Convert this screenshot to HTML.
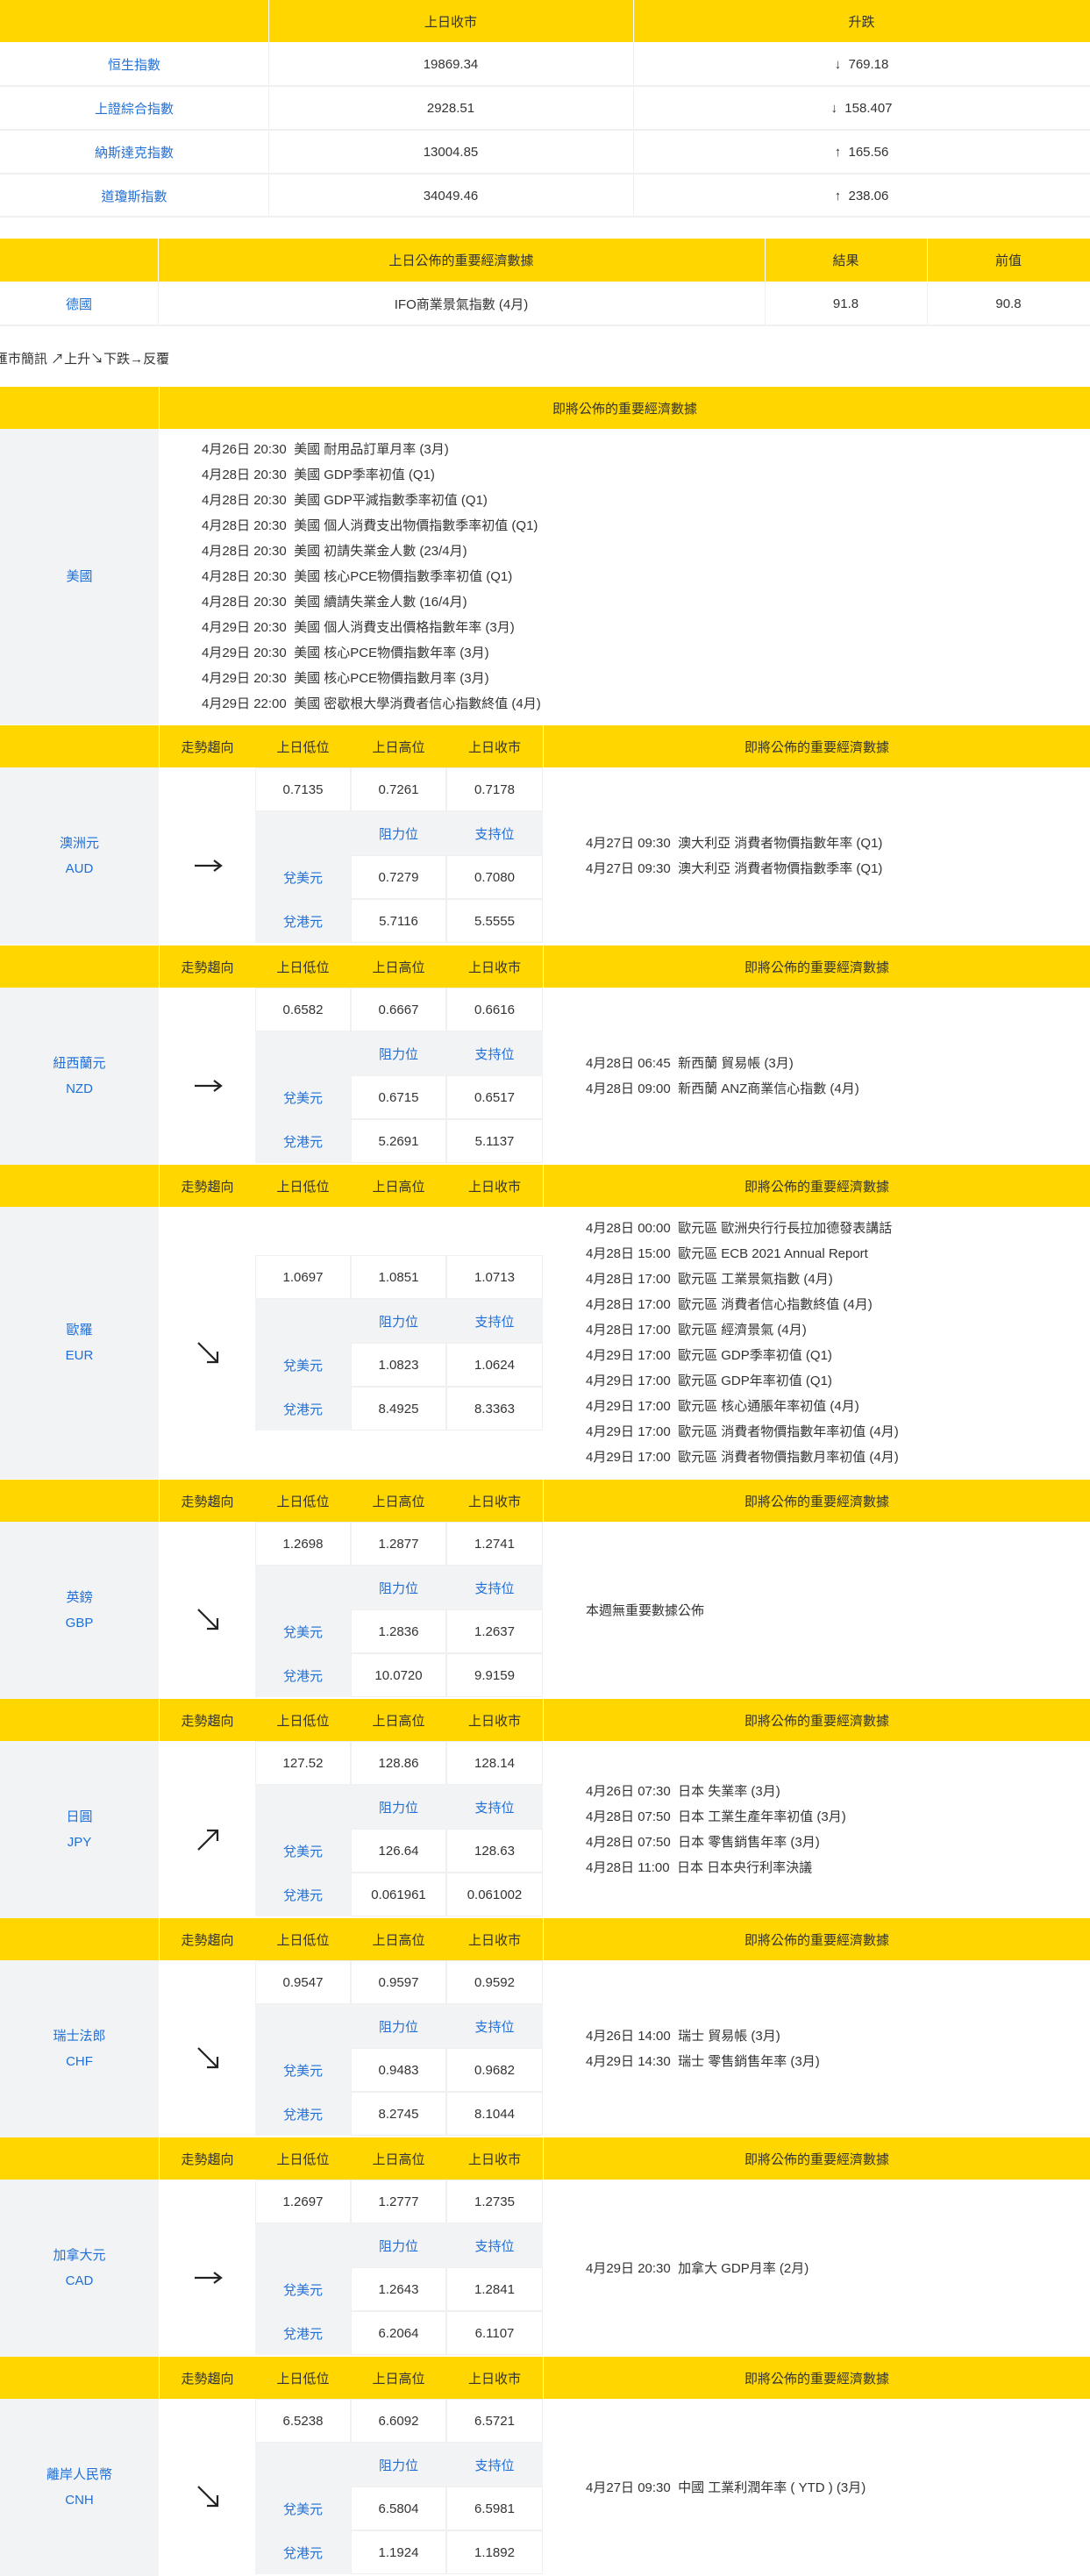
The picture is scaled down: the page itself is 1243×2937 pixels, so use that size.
<!DOCTYPE html>
<html><head><meta charset="utf-8">
<style>
*{margin:0;padding:0;box-sizing:border-box}
body{width:1243px;height:2928px;overflow:hidden;background:#fff;font-family:"Liberation Sans","Noto Sans CJK TC",sans-serif;font-size:15px;color:#333;position:relative}
.a{position:absolute}
.y{background:#FFD600}
.g{background:#F2F3F5}
.b{color:#1f6fd6}
.c{position:absolute;display:flex;align-items:center;justify-content:center;text-align:center}
.hl{position:absolute;top:0;width:1px;height:48px;background:#fff}
.blk{position:absolute;left:0;width:1243px}
.nw{position:absolute;left:620px;width:623px;display:flex;flex-direction:column;justify-content:center;padding-left:48px;line-height:29px;background:#fff}
.c1{position:absolute;left:0;width:181px;background:#F2F3F5;display:flex;flex-direction:column;justify-content:center;align-items:center;line-height:29px;color:#1f6fd6}
.it{position:absolute;left:182px;width:437px;height:200px}
.it .c{height:50px}
.w{background:#fff;border:1px solid #f0f0f0}
</style></head><body>

<!-- table 1 -->
<div class="a y" style="left:0;top:0;width:1243px;height:48px"></div>
<div class="hl" style="left:306px"></div><div class="hl" style="left:722px"></div>
<div class="c" style="left:306px;top:0;width:416px;height:48px">上日收市</div>
<div class="c" style="left:722px;top:0;width:521px;height:48px">升跌</div>
<div class="a" style="left:306px;top:48px;width:1px;height:200px;background:#f0f0f0"></div>
<div class="a" style="left:722px;top:48px;width:1px;height:200px;background:#f0f0f0"></div>
<div class="a" style="left:0;top:97px;width:1243px;height:2px;background:#f0f0f0"></div>
<div class="a" style="left:0;top:147px;width:1243px;height:2px;background:#f0f0f0"></div>
<div class="a" style="left:0;top:197px;width:1243px;height:2px;background:#f0f0f0"></div>
<div class="a" style="left:0;top:246px;width:1243px;height:2px;background:#f0f0f0"></div>
<div class="c b" style="left:0;top:48px;width:306px;height:50px">恒生指數</div>
<div class="c" style="left:306px;top:48px;width:416px;height:50px">19869.34</div>
<div class="c" style="left:722px;top:48px;width:521px;height:50px">↓&nbsp;&nbsp;769.18</div>
<div class="c b" style="left:0;top:98px;width:306px;height:50px">上證綜合指數</div>
<div class="c" style="left:306px;top:98px;width:416px;height:50px">2928.51</div>
<div class="c" style="left:722px;top:98px;width:521px;height:50px">↓&nbsp;&nbsp;158.407</div>
<div class="c b" style="left:0;top:148px;width:306px;height:50px">納斯達克指數</div>
<div class="c" style="left:306px;top:148px;width:416px;height:50px">13004.85</div>
<div class="c" style="left:722px;top:148px;width:521px;height:50px">↑&nbsp;&nbsp;165.56</div>
<div class="c b" style="left:0;top:198px;width:306px;height:50px">道瓊斯指數</div>
<div class="c" style="left:306px;top:198px;width:416px;height:50px">34049.46</div>
<div class="c" style="left:722px;top:198px;width:521px;height:50px">↑&nbsp;&nbsp;238.06</div>

<!-- table 2 -->
<div class="a y" style="left:0;top:272px;width:1243px;height:49px"></div>
<div class="hl" style="left:180px;top:272px;height:49px"></div><div class="hl" style="left:872px;top:272px;height:49px"></div><div class="hl" style="left:1057px;top:272px;height:49px"></div>
<div class="c" style="left:180px;top:272px;width:692px;height:49px">上日公佈的重要經濟數據</div>
<div class="c" style="left:872px;top:272px;width:185px;height:49px">結果</div>
<div class="c" style="left:1057px;top:272px;width:186px;height:49px">前值</div>
<div class="a" style="left:180px;top:321px;width:1px;height:50px;background:#f0f0f0"></div>
<div class="a" style="left:872px;top:321px;width:1px;height:50px;background:#f0f0f0"></div>
<div class="a" style="left:1057px;top:321px;width:1px;height:50px;background:#f0f0f0"></div>
<div class="a" style="left:0;top:370px;width:1243px;height:2px;background:#f0f0f0"></div>
<div class="c b" style="left:0;top:321px;width:180px;height:50px">德國</div>
<div class="c" style="left:180px;top:321px;width:692px;height:50px">IFO商業景氣指數 (4月)</div>
<div class="c" style="left:872px;top:321px;width:185px;height:50px">91.8</div>
<div class="c" style="left:1057px;top:321px;width:186px;height:50px">90.8</div>

<div class="a" style="left:-6px;top:399px;line-height:22px;white-space:nowrap">匯市簡訊 ↗上升↘下跌→反覆</div>

<!-- US -->
<div class="a y" style="left:0;top:441px;width:1243px;height:48px"></div>
<div class="hl" style="left:181px;top:441px"></div>
<div class="c" style="left:182px;top:441px;width:1061px;height:48px">即將公佈的重要經濟數據</div>
<div class="c1" style="top:489px;height:337px">美國</div>
<div class="a" style="left:230px;top:489px;height:337px;display:flex;flex-direction:column;justify-content:center;line-height:29px;white-space:nowrap">
<div>4月26日 20:30&nbsp; 美國 耐用品訂單月率 (3月)</div>
<div>4月28日 20:30&nbsp; 美國 GDP季率初值 (Q1)</div>
<div>4月28日 20:30&nbsp; 美國 GDP平減指數季率初值 (Q1)</div>
<div>4月28日 20:30&nbsp; 美國 個人消費支出物價指數季率初值 (Q1)</div>
<div>4月28日 20:30&nbsp; 美國 初請失業金人數 (23/4月)</div>
<div>4月28日 20:30&nbsp; 美國 核心PCE物價指數季率初值 (Q1)</div>
<div>4月28日 20:30&nbsp; 美國 續請失業金人數 (16/4月)</div>
<div>4月29日 20:30&nbsp; 美國 個人消費支出價格指數年率 (3月)</div>
<div>4月29日 20:30&nbsp; 美國 核心PCE物價指數年率 (3月)</div>
<div>4月29日 20:30&nbsp; 美國 核心PCE物價指數月率 (3月)</div>
<div>4月29日 22:00&nbsp; 美國 密歇根大學消費者信心指數終值 (4月)</div>
</div>

<!-- template blocks -->
<div class="blk" style="top:827px;height:250px">
<div class="a y" style="left:0;top:0;width:1243px;height:48px"></div><div class="hl" style="left:181px"></div><div class="hl" style="left:619px"></div>
<div class="c" style="left:182px;top:0;width:109px;height:48px">走勢趨向</div><div class="c" style="left:291px;top:0;width:109px;height:48px">上日低位</div><div class="c" style="left:400px;top:0;width:109px;height:48px">上日高位</div><div class="c" style="left:509px;top:0;width:110px;height:48px">上日收市</div><div class="c" style="left:620px;top:0;width:623px;height:48px">即將公佈的重要經濟數據</div>
<div class="c1" style="top:48px;height:202px"><div>澳洲元</div><div>AUD</div></div>
<div class="a" style="left:182px;top:48px;width:437px;height:202px;background:#fff"></div>
<div class="it" style="top:48px">
<div class="a" style="left:0;top:0;width:109px;height:200px;background:#fff"></div>
<div class="c w" style="left:109px;top:0;width:109px">0.7135</div><div class="c w" style="left:218px;top:0;width:109px">0.7261</div><div class="c w" style="left:327px;top:0;width:110px">0.7178</div>
<div class="a g" style="left:109px;top:50px;width:328px;height:50px"></div><div class="c b" style="left:218px;top:50px;width:109px">阻力位</div><div class="c b" style="left:327px;top:50px;width:110px">支持位</div>
<div class="c g b" style="left:109px;top:100px;width:109px">兌美元</div><div class="c w" style="left:218px;top:100px;width:109px">0.7279</div><div class="c w" style="left:327px;top:100px;width:110px">0.7080</div>
<div class="c g b" style="left:109px;top:150px;width:109px">兌港元</div><div class="c w" style="left:218px;top:150px;width:109px">5.7116</div><div class="c w" style="left:327px;top:150px;width:110px">5.5555</div>
<svg class="a" style="left:36px;top:100px" width="40" height="24"><path d="M4 12H33M26 6L34 12L26 18" stroke="#222" stroke-width="2.2" fill="none"/></svg>
</div>
<div class="nw" style="top:48px;height:202px"><div>4月27日 09:30&nbsp; 澳大利亞 消費者物價指數年率 (Q1)</div><div>4月27日 09:30&nbsp; 澳大利亞 消費者物價指數季率 (Q1)</div></div>
</div>

<div class="blk" style="top:1078px;height:250px">
<div class="a y" style="left:0;top:0;width:1243px;height:48px"></div><div class="hl" style="left:181px"></div><div class="hl" style="left:619px"></div>
<div class="c" style="left:182px;top:0;width:109px;height:48px">走勢趨向</div><div class="c" style="left:291px;top:0;width:109px;height:48px">上日低位</div><div class="c" style="left:400px;top:0;width:109px;height:48px">上日高位</div><div class="c" style="left:509px;top:0;width:110px;height:48px">上日收市</div><div class="c" style="left:620px;top:0;width:623px;height:48px">即將公佈的重要經濟數據</div>
<div class="c1" style="top:48px;height:202px"><div>紐西蘭元</div><div>NZD</div></div>
<div class="a" style="left:182px;top:48px;width:437px;height:202px;background:#fff"></div>
<div class="it" style="top:48px">
<div class="c w" style="left:109px;top:0;width:109px">0.6582</div><div class="c w" style="left:218px;top:0;width:109px">0.6667</div><div class="c w" style="left:327px;top:0;width:110px">0.6616</div>
<div class="a g" style="left:109px;top:50px;width:328px;height:50px"></div><div class="c b" style="left:218px;top:50px;width:109px">阻力位</div><div class="c b" style="left:327px;top:50px;width:110px">支持位</div>
<div class="c g b" style="left:109px;top:100px;width:109px">兌美元</div><div class="c w" style="left:218px;top:100px;width:109px">0.6715</div><div class="c w" style="left:327px;top:100px;width:110px">0.6517</div>
<div class="c g b" style="left:109px;top:150px;width:109px">兌港元</div><div class="c w" style="left:218px;top:150px;width:109px">5.2691</div><div class="c w" style="left:327px;top:150px;width:110px">5.1137</div>
<svg class="a" style="left:36px;top:100px" width="40" height="24"><path d="M4 12H33M26 6L34 12L26 18" stroke="#222" stroke-width="2.2" fill="none"/></svg>
</div>
<div class="nw" style="top:48px;height:202px"><div>4月28日 06:45&nbsp; 新西蘭 貿易帳 (3月)</div><div>4月28日 09:00&nbsp; 新西蘭 ANZ商業信心指數 (4月)</div></div>
</div>

<div class="blk" style="top:1328px;height:358px">
<div class="a y" style="left:0;top:0;width:1243px;height:48px"></div><div class="hl" style="left:181px"></div><div class="hl" style="left:619px"></div>
<div class="c" style="left:182px;top:0;width:109px;height:48px">走勢趨向</div><div class="c" style="left:291px;top:0;width:109px;height:48px">上日低位</div><div class="c" style="left:400px;top:0;width:109px;height:48px">上日高位</div><div class="c" style="left:509px;top:0;width:110px;height:48px">上日收市</div><div class="c" style="left:620px;top:0;width:623px;height:48px">即將公佈的重要經濟數據</div>
<div class="c1" style="top:48px;height:310px"><div>歐羅</div><div>EUR</div></div>
<div class="a" style="left:182px;top:48px;width:437px;height:310px;background:#fff"></div>
<div class="it" style="top:103px">
<div class="c w" style="left:109px;top:0;width:109px">1.0697</div><div class="c w" style="left:218px;top:0;width:109px">1.0851</div><div class="c w" style="left:327px;top:0;width:110px">1.0713</div>
<div class="a g" style="left:109px;top:50px;width:328px;height:50px"></div><div class="c b" style="left:218px;top:50px;width:109px">阻力位</div><div class="c b" style="left:327px;top:50px;width:110px">支持位</div>
<div class="c g b" style="left:109px;top:100px;width:109px">兌美元</div><div class="c w" style="left:218px;top:100px;width:109px">1.0823</div><div class="c w" style="left:327px;top:100px;width:110px">1.0624</div>
<div class="c g b" style="left:109px;top:150px;width:109px">兌港元</div><div class="c w" style="left:218px;top:150px;width:109px">8.4925</div><div class="c w" style="left:327px;top:150px;width:110px">8.3363</div>
<svg class="a" style="left:40px;top:96px" width="32" height="32"><path d="M4 4L26 26M26 14V26H14" stroke="#222" stroke-width="2.2" fill="none"/></svg>
</div>
<div class="nw" style="top:48px;height:310px"><div>4月28日 00:00&nbsp; 歐元區 歐洲央行行長拉加德發表講話</div><div>4月28日 15:00&nbsp; 歐元區 ECB 2021 Annual Report</div><div>4月28日 17:00&nbsp; 歐元區 工業景氣指數 (4月)</div><div>4月28日 17:00&nbsp; 歐元區 消費者信心指數終值 (4月)</div><div>4月28日 17:00&nbsp; 歐元區 經濟景氣 (4月)</div><div>4月29日 17:00&nbsp; 歐元區 GDP季率初值 (Q1)</div><div>4月29日 17:00&nbsp; 歐元區 GDP年率初值 (Q1)</div><div>4月29日 17:00&nbsp; 歐元區 核心通脹年率初值 (4月)</div><div>4月29日 17:00&nbsp; 歐元區 消費者物價指數年率初值 (4月)</div><div>4月29日 17:00&nbsp; 歐元區 消費者物價指數月率初值 (4月)</div></div>
</div>

<div class="blk" style="top:1687px;height:250px">
<div class="a y" style="left:0;top:0;width:1243px;height:48px"></div><div class="hl" style="left:181px"></div><div class="hl" style="left:619px"></div>
<div class="c" style="left:182px;top:0;width:109px;height:48px">走勢趨向</div><div class="c" style="left:291px;top:0;width:109px;height:48px">上日低位</div><div class="c" style="left:400px;top:0;width:109px;height:48px">上日高位</div><div class="c" style="left:509px;top:0;width:110px;height:48px">上日收市</div><div class="c" style="left:620px;top:0;width:623px;height:48px">即將公佈的重要經濟數據</div>
<div class="c1" style="top:48px;height:202px"><div>英鎊</div><div>GBP</div></div>
<div class="a" style="left:182px;top:48px;width:437px;height:202px;background:#fff"></div>
<div class="it" style="top:48px">
<div class="c w" style="left:109px;top:0;width:109px">1.2698</div><div class="c w" style="left:218px;top:0;width:109px">1.2877</div><div class="c w" style="left:327px;top:0;width:110px">1.2741</div>
<div class="a g" style="left:109px;top:50px;width:328px;height:50px"></div><div class="c b" style="left:218px;top:50px;width:109px">阻力位</div><div class="c b" style="left:327px;top:50px;width:110px">支持位</div>
<div class="c g b" style="left:109px;top:100px;width:109px">兌美元</div><div class="c w" style="left:218px;top:100px;width:109px">1.2836</div><div class="c w" style="left:327px;top:100px;width:110px">1.2637</div>
<div class="c g b" style="left:109px;top:150px;width:109px">兌港元</div><div class="c w" style="left:218px;top:150px;width:109px">10.0720</div><div class="c w" style="left:327px;top:150px;width:110px">9.9159</div>
<svg class="a" style="left:40px;top:96px" width="32" height="32"><path d="M4 4L26 26M26 14V26H14" stroke="#222" stroke-width="2.2" fill="none"/></svg>
</div>
<div class="nw" style="top:48px;height:202px"><div>本週無重要數據公佈</div></div>
</div>

<div class="blk" style="top:1937px;height:250px">
<div class="a y" style="left:0;top:0;width:1243px;height:48px"></div><div class="hl" style="left:181px"></div><div class="hl" style="left:619px"></div>
<div class="c" style="left:182px;top:0;width:109px;height:48px">走勢趨向</div><div class="c" style="left:291px;top:0;width:109px;height:48px">上日低位</div><div class="c" style="left:400px;top:0;width:109px;height:48px">上日高位</div><div class="c" style="left:509px;top:0;width:110px;height:48px">上日收市</div><div class="c" style="left:620px;top:0;width:623px;height:48px">即將公佈的重要經濟數據</div>
<div class="c1" style="top:48px;height:202px"><div>日圓</div><div>JPY</div></div>
<div class="a" style="left:182px;top:48px;width:437px;height:202px;background:#fff"></div>
<div class="it" style="top:48px">
<div class="c w" style="left:109px;top:0;width:109px">127.52</div><div class="c w" style="left:218px;top:0;width:109px">128.86</div><div class="c w" style="left:327px;top:0;width:110px">128.14</div>
<div class="a g" style="left:109px;top:50px;width:328px;height:50px"></div><div class="c b" style="left:218px;top:50px;width:109px">阻力位</div><div class="c b" style="left:327px;top:50px;width:110px">支持位</div>
<div class="c g b" style="left:109px;top:100px;width:109px">兌美元</div><div class="c w" style="left:218px;top:100px;width:109px">126.64</div><div class="c w" style="left:327px;top:100px;width:110px">128.63</div>
<div class="c g b" style="left:109px;top:150px;width:109px">兌港元</div><div class="c w" style="left:218px;top:150px;width:109px">0.061961</div><div class="c w" style="left:327px;top:150px;width:110px">0.061002</div>
<svg class="a" style="left:40px;top:96px" width="32" height="32"><path d="M4 28L26 6M14 6H26V18" stroke="#222" stroke-width="2.2" fill="none"/></svg>
</div>
<div class="nw" style="top:48px;height:202px"><div>4月26日 07:30&nbsp; 日本 失業率 (3月)</div><div>4月28日 07:50&nbsp; 日本 工業生產年率初值 (3月)</div><div>4月28日 07:50&nbsp; 日本 零售銷售年率 (3月)</div><div>4月28日 11:00&nbsp; 日本 日本央行利率決議</div></div>
</div>

<div class="blk" style="top:2187px;height:250px">
<div class="a y" style="left:0;top:0;width:1243px;height:48px"></div><div class="hl" style="left:181px"></div><div class="hl" style="left:619px"></div>
<div class="c" style="left:182px;top:0;width:109px;height:48px">走勢趨向</div><div class="c" style="left:291px;top:0;width:109px;height:48px">上日低位</div><div class="c" style="left:400px;top:0;width:109px;height:48px">上日高位</div><div class="c" style="left:509px;top:0;width:110px;height:48px">上日收市</div><div class="c" style="left:620px;top:0;width:623px;height:48px">即將公佈的重要經濟數據</div>
<div class="c1" style="top:48px;height:202px"><div>瑞士法郎</div><div>CHF</div></div>
<div class="a" style="left:182px;top:48px;width:437px;height:202px;background:#fff"></div>
<div class="it" style="top:48px">
<div class="c w" style="left:109px;top:0;width:109px">0.9547</div><div class="c w" style="left:218px;top:0;width:109px">0.9597</div><div class="c w" style="left:327px;top:0;width:110px">0.9592</div>
<div class="a g" style="left:109px;top:50px;width:328px;height:50px"></div><div class="c b" style="left:218px;top:50px;width:109px">阻力位</div><div class="c b" style="left:327px;top:50px;width:110px">支持位</div>
<div class="c g b" style="left:109px;top:100px;width:109px">兌美元</div><div class="c w" style="left:218px;top:100px;width:109px">0.9483</div><div class="c w" style="left:327px;top:100px;width:110px">0.9682</div>
<div class="c g b" style="left:109px;top:150px;width:109px">兌港元</div><div class="c w" style="left:218px;top:150px;width:109px">8.2745</div><div class="c w" style="left:327px;top:150px;width:110px">8.1044</div>
<svg class="a" style="left:40px;top:96px" width="32" height="32"><path d="M4 4L26 26M26 14V26H14" stroke="#222" stroke-width="2.2" fill="none"/></svg>
</div>
<div class="nw" style="top:48px;height:202px"><div>4月26日 14:00&nbsp; 瑞士 貿易帳 (3月)</div><div>4月29日 14:30&nbsp; 瑞士 零售銷售年率 (3月)</div></div>
</div>

<div class="blk" style="top:2437px;height:250px">
<div class="a y" style="left:0;top:0;width:1243px;height:48px"></div><div class="hl" style="left:181px"></div><div class="hl" style="left:619px"></div>
<div class="c" style="left:182px;top:0;width:109px;height:48px">走勢趨向</div><div class="c" style="left:291px;top:0;width:109px;height:48px">上日低位</div><div class="c" style="left:400px;top:0;width:109px;height:48px">上日高位</div><div class="c" style="left:509px;top:0;width:110px;height:48px">上日收市</div><div class="c" style="left:620px;top:0;width:623px;height:48px">即將公佈的重要經濟數據</div>
<div class="c1" style="top:48px;height:202px"><div>加拿大元</div><div>CAD</div></div>
<div class="a" style="left:182px;top:48px;width:437px;height:202px;background:#fff"></div>
<div class="it" style="top:48px">
<div class="c w" style="left:109px;top:0;width:109px">1.2697</div><div class="c w" style="left:218px;top:0;width:109px">1.2777</div><div class="c w" style="left:327px;top:0;width:110px">1.2735</div>
<div class="a g" style="left:109px;top:50px;width:328px;height:50px"></div><div class="c b" style="left:218px;top:50px;width:109px">阻力位</div><div class="c b" style="left:327px;top:50px;width:110px">支持位</div>
<div class="c g b" style="left:109px;top:100px;width:109px">兌美元</div><div class="c w" style="left:218px;top:100px;width:109px">1.2643</div><div class="c w" style="left:327px;top:100px;width:110px">1.2841</div>
<div class="c g b" style="left:109px;top:150px;width:109px">兌港元</div><div class="c w" style="left:218px;top:150px;width:109px">6.2064</div><div class="c w" style="left:327px;top:150px;width:110px">6.1107</div>
<svg class="a" style="left:36px;top:100px" width="40" height="24"><path d="M4 12H33M26 6L34 12L26 18" stroke="#222" stroke-width="2.2" fill="none"/></svg>
</div>
<div class="nw" style="top:48px;height:202px"><div>4月29日 20:30&nbsp; 加拿大 GDP月率 (2月)</div></div>
</div>

<div class="blk" style="top:2687px;height:250px">
<div class="a y" style="left:0;top:0;width:1243px;height:48px"></div><div class="hl" style="left:181px"></div><div class="hl" style="left:619px"></div>
<div class="c" style="left:182px;top:0;width:109px;height:48px">走勢趨向</div><div class="c" style="left:291px;top:0;width:109px;height:48px">上日低位</div><div class="c" style="left:400px;top:0;width:109px;height:48px">上日高位</div><div class="c" style="left:509px;top:0;width:110px;height:48px">上日收市</div><div class="c" style="left:620px;top:0;width:623px;height:48px">即將公佈的重要經濟數據</div>
<div class="c1" style="top:48px;height:202px"><div>離岸人民幣</div><div>CNH</div></div>
<div class="a" style="left:182px;top:48px;width:437px;height:202px;background:#fff"></div>
<div class="it" style="top:48px">
<div class="c w" style="left:109px;top:0;width:109px">6.5238</div><div class="c w" style="left:218px;top:0;width:109px">6.6092</div><div class="c w" style="left:327px;top:0;width:110px">6.5721</div>
<div class="a g" style="left:109px;top:50px;width:328px;height:50px"></div><div class="c b" style="left:218px;top:50px;width:109px">阻力位</div><div class="c b" style="left:327px;top:50px;width:110px">支持位</div>
<div class="c g b" style="left:109px;top:100px;width:109px">兌美元</div><div class="c w" style="left:218px;top:100px;width:109px">6.5804</div><div class="c w" style="left:327px;top:100px;width:110px">6.5981</div>
<div class="c g b" style="left:109px;top:150px;width:109px">兌港元</div><div class="c w" style="left:218px;top:150px;width:109px">1.1924</div><div class="c w" style="left:327px;top:150px;width:110px">1.1892</div>
<svg class="a" style="left:40px;top:96px" width="32" height="32"><path d="M4 4L26 26M26 14V26H14" stroke="#222" stroke-width="2.2" fill="none"/></svg>
</div>
<div class="nw" style="top:48px;height:202px"><div>4月27日 09:30&nbsp; 中國 工業利潤年率 ( YTD ) (3月)</div></div>
</div>

</body></html>
